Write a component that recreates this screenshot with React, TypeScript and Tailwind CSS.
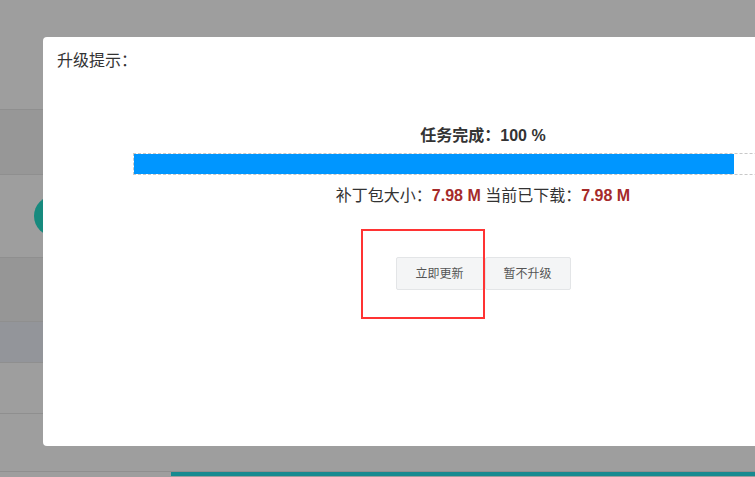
export default function App() {
  const font = { fontFamily: '"Liberation Sans", "Noto Sans CJK SC", sans-serif' };
  return (
    <div className="relative w-[755px] h-[477px] overflow-hidden bg-[#9e9e9e]" style={font}>
      {/* underlying page, dimmed */}
      <div className="flex flex-col">
        <div className="h-[110px] border-b border-[#8f8f8f]" />
        <div className="h-[65px] bg-[#979797] border-b border-[#8f8f8f]" />
        <div className="h-[83px] border-b border-[#8f8f8f] flex items-center pl-[34px]">
          <div className="w-[40px] h-[40px] rounded-full bg-[#178a7e]" />
        </div>
        <div className="h-[64px] bg-[#969696] border-b border-[#8f8f8f]" />
        <div className="h-[41px] bg-[#93959a] border-b border-[#8f8f8f]" />
        <div className="h-[51px] border-b border-[#8f8f8f]" />
        <div className="h-[58px] border-b border-[#8f8f8f]" />
        <div className="flex"><div className="w-[171px]" /><div className="flex-1 h-[4px] bg-[#178a90]" /></div>
      </div>

      {/* modal */}
      <div className="absolute left-[43px] top-[37px] w-[880px] h-[409px] bg-white rounded-[4px]">
        <div className="pl-[14px] pt-[14px] text-[16px] text-[#333] leading-[20px]">升级提示：</div>
        <div className="flex flex-col items-center mt-[55px]">
          <div className="text-[16px] font-bold text-[#333] leading-[20px]">任务完成：100 %</div>
          <div className="mt-[7px] w-[790px] ml-[90px] self-start h-[22px] border border-dashed border-[#c8c8c8] flex">
            <div className="w-[600px] h-full bg-[#0096ff]" />
          </div>
          <div className="mt-[11px] text-[16px] text-[#333] leading-[20px]">
            补丁包大小：<span className="font-bold text-[#a52a2a]">7.98 M</span> 当前已下载：<span className="font-bold text-[#a52a2a]">7.98 M</span>
          </div>
          <div className="relative mt-[51px] flex gap-[1px]">
            <button className="w-[88px] h-[33px] bg-[#f4f5f6] border border-[#e3e5e7] rounded-[2px] text-[12px] text-[#555]">立即更新</button>
            <button className="w-[86px] h-[33px] bg-[#f4f5f6] border border-[#e3e5e7] rounded-[2px] text-[12px] text-[#555]">暂不升级</button>
            <div className="absolute left-[-35px] top-[-28px] w-[124px] h-[90px] border-2 border-[#f33]" />
          </div>
        </div>
      </div>
    </div>
  );
}
